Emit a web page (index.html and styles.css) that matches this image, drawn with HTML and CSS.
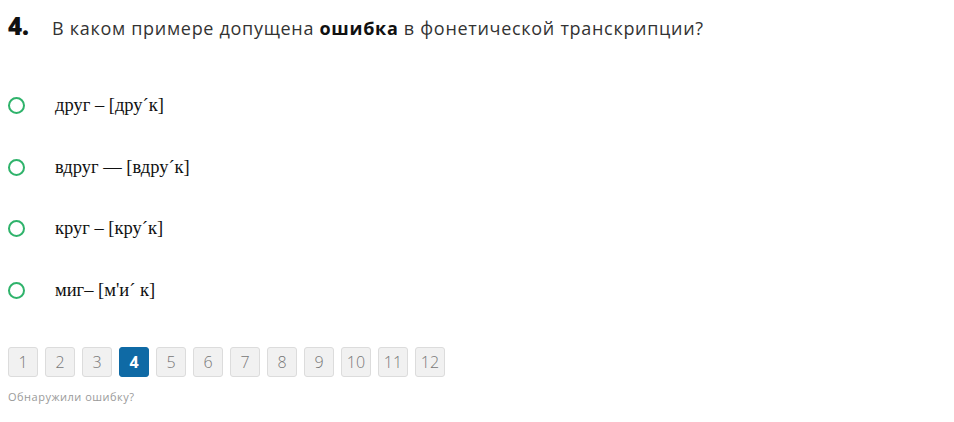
FILE: index.html
```html
<!DOCTYPE html>
<html lang="ru">
<head>
  <meta charset="UTF-8">
  <title>Тест</title>
  <link rel="stylesheet" href="styles.css">
</head>
<body>

<div class="quiz">
  <div class="question">
    <span class="num">4.</span>
    <span class="text">В каком примере допущена <b>ошибка</b> в фонетической транскрипции?</span>
  </div>

  <ul class="answers">
    <li class="answer"><span class="radio"></span><span class="label">друг – [дру´к]</span></li>
    <li class="answer"><span class="radio"></span><span class="label">вдруг — [вдру´к]</span></li>
    <li class="answer"><span class="radio"></span><span class="label">круг – [кру´к]</span></li>
    <li class="answer"><span class="radio"></span><span class="label">миг– [м'и´ к]</span></li>
  </ul>

  <div class="pages">
    <span class="page">1</span>
    <span class="page">2</span>
    <span class="page">3</span>
    <span class="page active">4</span>
    <span class="page">5</span>
    <span class="page">6</span>
    <span class="page">7</span>
    <span class="page">8</span>
    <span class="page">9</span>
    <span class="page">10</span>
    <span class="page">11</span>
    <span class="page">12</span>
  </div>

  <a class="report">Обнаружили ошибку?</a>
</div>

</body>
</html>
```

FILE: styles.css
```css
body {
  margin: 0;
  background: #fff;
  font-family: "Open Sans", Arial, sans-serif;
  color: #333;
}

.quiz {
  padding: 9px 8px 0;
}

.question {
  display: flex;
  align-items: baseline;
}

.num {
  width: 44px;
  font-size: 24px;
  font-weight: 800;
  color: #111;
}

.text {
  font-size: 18px;
  letter-spacing: 0.7px;
  color: #333;
}

.text b {
  color: #111;
}

.answers {
  list-style: none;
  margin: 33px 0 0;
  padding: 0;
}

.answer {
  display: flex;
  align-items: center;
  height: 61.5px;
}

.radio {
  width: 13px;
  height: 13px;
  border: 2.5px solid #2fb36b;
  border-radius: 50%;
  margin-right: 30px;
}

.label {
  font-family: "Liberation Serif", "Times New Roman", serif;
  font-size: 18.5px;
  color: #111;
}

.pages {
  display: flex;
  gap: 7px;
  margin-top: 26px;
}

.page {
  width: 28px;
  height: 28px;
  border: 1px solid #dcdcdc;
  border-radius: 3px;
  background: #f1f1f1;
  color: #777;
  font-size: 16px;
  font-weight: 300;
  display: flex;
  align-items: center;
  justify-content: center;
}

.page.active {
  background: #0f6aa5;
  border-color: #0f6aa5;
  color: #fff;
  font-weight: 700;
}

.report {
  display: block;
  margin-top: 12px;
  font-size: 11px;
  letter-spacing: 0.5px;
  color: #9a9a9a;
}
```
